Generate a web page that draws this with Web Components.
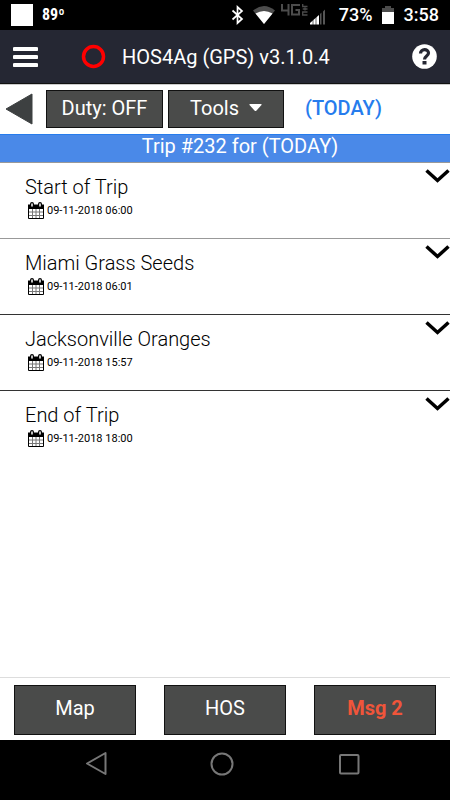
<!DOCTYPE html>
<html lang="en">
<head>
<meta charset="utf-8">
<meta name="viewport" content="width=device-width, initial-scale=1">
<title>HOS4Ag</title>
<style>
html, body { margin: 0; background: #fff; }
body { font-family: Roboto, "Liberation Sans", sans-serif; font-size: 20px; line-height: 24px; color: #000; }
</style>
</head>
<body>
<hos-app></hos-app>
<script>
const define = (name, markup) => {
  const template = document.createElement('template');
  template.innerHTML = '<style>*{box-sizing:border-box}svg{display:block;flex:none}</style>' + markup;
  customElements.define(name, class extends HTMLElement {
    constructor() {
      super();
      this.attachShadow({ mode: 'open' }).append(template.content.cloneNode(true));
    }
  });
};

define('status-bar', `
<style>
:host { display: flex; align-items: center; height: 30px; padding: 0 11px; background: #000; color: #fff; box-sizing: border-box; }
.square { width: 22px; height: 22px; background: #fff; margin-right: 9px; }
.temp { flex: 1; font: 700 16px/32px "Roboto Condensed", "Liberation Sans Narrow", Roboto, sans-serif; }
.battery, .clock { font-size: 18px; font-weight: 500; line-height: 32px; }
</style>
<span class="square"></span><span class="temp">89º</span>
<svg width="108" height="30" viewBox="231 0 108 30" aria-hidden="true">
  <path d="M232.500 10.500 242 19 237.500 23V7L242 11 232.500 19.500" fill="none" stroke="#fff" stroke-width="1.700"/>
  <path d="M253 10.500Q264 1.500 275 10.500L264 24Z" fill="#4c4c4c"/>
  <path d="M255.500 13.500Q264 8.500 272.500 13.500L264 24Z" fill="#fff"/>
  <path d="M282 4V10.500H289.500M288.500 4V15.500M300 5H292V14.500H299V10H295.500" fill="none" stroke="#4c4c4c" stroke-width="2"/>
  <path d="M302.700 4V6.500H307.500M302.700 9H307.500M305 7.500V10.500M307.500 12H302.700V15H307.500" fill="none" stroke="#4c4c4c" stroke-width="1.300"/>
  <path d="M310 24.500V23L319 15V24.500Z" fill="#fff"/>
  <path d="M313 20V25M316 17V25" stroke="#000" stroke-width=".600"/>
  <path d="M320 14 321.500 12.500V24.500H320ZM323 11.500 325 9.500V24.500H323Z" fill="#555"/>
</svg>
<span class="battery">73%</span>
<svg width="31" height="30" viewBox="0 0 31 30" aria-hidden="true">
  <path d="M12 6H18V8H21V12H9V8H12Z" fill="#4c4c4c"/><path d="M9 12H21V24H9Z" fill="#fff"/>
</svg>
<span class="clock">3:58</span>
`);

define('app-header', `
<style>
:host { display: flex; align-items: center; height: 54px; padding: 0 13px; background: #252733; color: #fff; border-bottom: 1px solid #111; box-sizing: border-box; }
button { border: 0; padding: 0; background: none; color: inherit; }
h1 { flex: 1; margin: 0 0 0 16px; font: 400 20px/24px Roboto, sans-serif; }
.ring { margin-left: 43px; }
</style>
<button aria-label="Menu"><svg width="25" height="22" viewBox="0 0 25 22"><path d="M1.500 3H23.500M1.500 11H23.500M1.500 19H23.500" stroke="#fff" stroke-width="4" stroke-linecap="round"/></svg></button>
<svg class="ring" width="25" height="25" viewBox="0 0 25 25" aria-hidden="true"><circle cx="12.500" cy="12.500" r="10" fill="none" stroke="red" stroke-width="3.500"/></svg>
<h1>HOS4Ag (GPS) v3.1.0.4</h1>
<button aria-label="Help"><svg width="25" height="25" viewBox="0 0 25 25"><circle cx="12.500" cy="12.500" r="12.300" fill="#fff"/><path d="M8.500 9.500C8.500 4.500 16.500 4.500 16.500 9C16.500 12 12.500 12 12.500 15.500" fill="none" stroke="#252733" stroke-width="3.200"/><path d="M10.500 17H14.500V20.500H10.500Z" fill="#252733"/></svg></button>
`);

define('dark-button', `
<style>
:host { display: block; min-width: 0; }
button { display: flex; align-items: center; justify-content: center; gap: 10px; width: 100%; height: var(--button-height, 38px); padding: 0 0 var(--button-lift, 2px); border: 1px solid #111; background: #4a4b4a; color: var(--button-color, #fff); font: var(--button-weight, 400) 20px/24px Roboto, sans-serif; white-space: nowrap; }
</style>
<button><slot></slot></button>
`);

define('duty-toolbar', `
<style>
:host { display: grid; grid-template-columns: 36px 117px 116px 1fr; column-gap: 5px; align-items: center; height: 50px; padding: 0 5px 1px; border-top: 1px solid #ccc; box-sizing: border-box; }
.back { border: 0; padding: 0; background: none; }
strong { margin-left: 16px; padding-bottom: 2px; color: #267ced; font-weight: 500; }
</style>
<button class="back" aria-label="Back"><svg width="28" height="32" viewBox="0 0 28 32"><path d="M1 16 27 1V31Z" fill="#3d4041" stroke="#3d4041" stroke-linejoin="round"/></svg></button>
<dark-button>Duty: OFF</dark-button>
<dark-button>Tools <svg width="13" height="8" viewBox="0 0 13 8" aria-hidden="true"><path d="M1 0H12Q13 0 12.500 1L7.500 6.500Q6.500 7.500 5.500 6.500L.5 1Q0 0 1 0Z" fill="#fff"/></svg></dark-button>
<strong>(TODAY)</strong>
`);

define('trip-title', `
<style>
:host { display: block; border-top: 1px solid #267ced; border-bottom: 1px solid #999; background: #4a89e8; }
h2 { margin: 0; padding: 0 0 5px 30px; text-align: center; color: #fff; font: 400 20px/22px Roboto, sans-serif; }
</style>
<h2><slot></slot></h2>
`);

define('trip-stop', `
<style>
:host { display: flex; justify-content: space-between; align-items: flex-start; min-height: 76px; padding: 12px 0 0 25px; border-bottom: 1px solid var(--rule, #333); box-sizing: border-box; }
h3 { margin: 0; font: 300 20px/24px Roboto, sans-serif; }
p { display: flex; align-items: center; gap: 3px; margin: 2px 0 0 3px; font-size: 11px; line-height: 20px; }
button { margin-top: -7px; padding: 0; border: 0; background: none; }
</style>
<div>
  <h3><slot name="place"></slot></h3>
  <p><svg width="16" height="18" viewBox="0 0 16 18" aria-hidden="true"><path d="M.5 4H15.500V16.500H.5Z" fill="#fff" stroke="#000"/><path d="M0 2.500H16V7H0Z"/><path d="M4.500 7V16M8 7V16M11.500 7V16M1 10H15M1 13.500H15" stroke="#777"/><path d="M4 2V4M12 2V4" stroke="#000" stroke-width="4" stroke-linecap="round"/><path d="M4 2V4M12 2V4" stroke="#fff" stroke-width="1.500" stroke-linecap="round"/></svg><slot name="time"></slot></p>
</div>
<button aria-label="Show stop details"><svg width="25" height="16" viewBox="0 0 25 16"><path d="M1.500 2.500 12.500 12.500 23.500 2.500" fill="none" stroke="#000" stroke-width="3.500"/></svg></button>
`);

define('bottom-actions', `
<style>
:host { display: grid; grid-template-columns: repeat(3, 1fr); gap: 28px; padding: 7px 14px 5px; border-top: 1px solid #ddd; --button-height: 50px; --button-lift: 4px; }
.alert { --button-color: #f0553a; --button-weight: 700; }
</style>
<dark-button>Map</dark-button><dark-button>HOS</dark-button><dark-button class="alert">Msg 2</dark-button>
`);

define('system-nav', `
<style>
:host { display: flex; justify-content: center; gap: 103px; height: 60px; padding: 11px 6px 0 0; background: #000; box-sizing: border-box; }
button { height: 26px; padding: 0; border: 0; background: none; }
</style>
<button aria-label="Back"><svg width="24" height="26" viewBox="0 0 24 26"><path d="M4 12.500 22.500 2V23Z" fill="none" stroke="#777" stroke-width="2" stroke-linejoin="round"/></svg></button>
<button aria-label="Home"><svg width="24" height="26" viewBox="0 0 24 26"><circle cx="12" cy="13" r="10.500" fill="none" stroke="#777" stroke-width="2"/></svg></button>
<button aria-label="Recent apps"><svg width="24" height="26" viewBox="0 0 24 26"><rect x="3" y="4" width="18.500" height="18.500" rx="1" fill="none" stroke="#777" stroke-width="2"/></svg></button>
`);

define('hos-app', `
<style>
:host { display: flex; flex-direction: column; min-height: 100vh; }
main { flex: 1; }
.first { --rule: #999; }
.last { --rule: transparent; }
</style>
<status-bar></status-bar>
<app-header></app-header>
<duty-toolbar></duty-toolbar>
<main>
  <trip-title>Trip #232 for (TODAY)</trip-title>
  <trip-stop class="first"><span slot="place">Start of Trip</span><time slot="time">09-11-2018 06:00</time></trip-stop>
  <trip-stop><span slot="place">Miami Grass Seeds</span><time slot="time">09-11-2018 06:01</time></trip-stop>
  <trip-stop><span slot="place">Jacksonville Oranges</span><time slot="time">09-11-2018 15:57</time></trip-stop>
  <trip-stop class="last"><span slot="place">End of Trip</span><time slot="time">09-11-2018 18:00</time></trip-stop>
</main>
<bottom-actions></bottom-actions>
<system-nav></system-nav>
`);
</script>
</body>
</html>
